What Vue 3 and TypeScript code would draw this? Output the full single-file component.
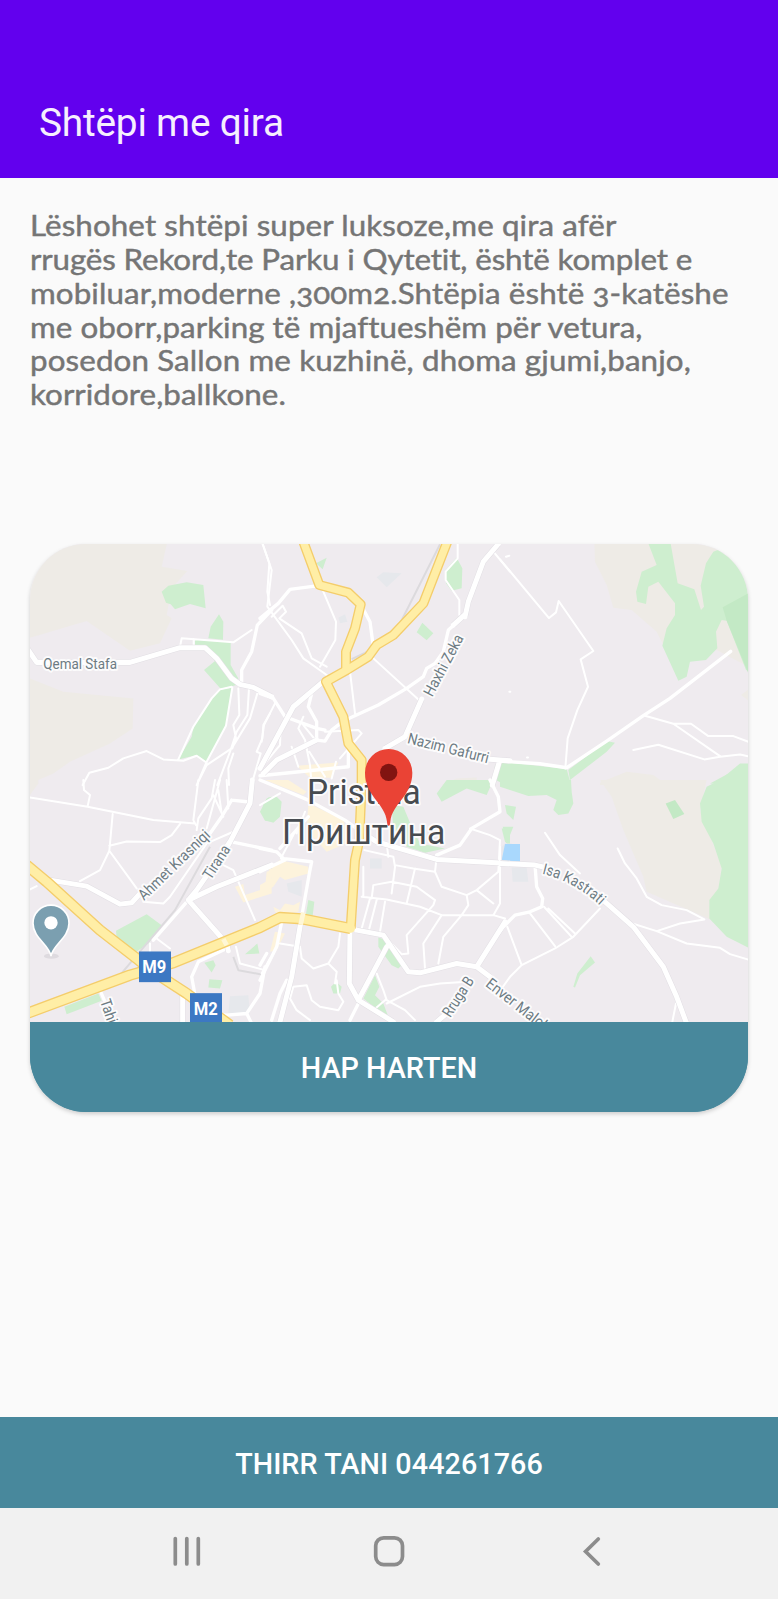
<script setup lang="ts">
interface Tile {
  x: number
  y: number
  beige?: string
  sand?: string
  green?: string
  dark?: string
  blue?: string
  rail?: string
  thin?: string
  mid?: string
  wide?: string
}

const description: string[] = [
  'Lëshohet shtëpi super luksoze,me qira afër',
  'rrugës Rekord,te Parku i Qytetit, është komplet e',
  'mobiluar,moderne ,300m2.Shtëpia është 3-katëshe',
  'me oborr,parking të mjaftueshëm për vetura,',
  'posedon Sallon me kuzhinë, dhoma gjumi,banjo,',
  'korridore,ballkone.',
]

// Map sectors; every sector's geometry is local to its origin.
const tiles: Tile[] = [
  {
    x: 0, y: 0,
    beige: 'M20 20H442L425 95 502 108 455 160 440 240 455 250 420 325 330 347 200 258 30 308ZM30 430L130 470 340 490 338 580 270 625 150 680 100 715 30 745Z',
    green: 'M425 170L445 152 500 142 550 150 557 220 510 207 465 223 452 208 438 203ZM597 238L610 260 609 314 565 310 572 275ZM525 312L632 320V390L655 430 650 450 602 461 552 405 585 378 560 340 525 335ZM635 457L620 572 560 680 530 660 475 673 515 605 520 575 575 490 600 465Z',
    thin: 'M480 335L485 310 640 322 695 285M521 312V335M655 460L658 540 640 570 648 610 637 640M687 460L682 540 650 590 630 650 592 750M712 475L690 550 635 640 560 690 530 750M637 457L618 572 560 680 530 750M640 655L625 700 627 750M188 750L208 713 265 698 310 670 380 648 430 673 490 677 530 662 560 683M600 463L575 490 520 575 475 673M600 463L635 455M750 535L730 570 727 610 710 650 722 655 700 730M728 27L748 85 742 170 750 210',
    mid: 'M665 440V405L695 350 712 270 755 225',
    wide: 'M15 330L50 382H330L480 338H555L590 370 635 430 660 448 700 457 755 485',
  },
  {
    x: 720, y: 0,
    green: 'M590 68L607 100 605 160 575 167 558 145 557 105ZM487 263L520 295 500 316 470 292ZM168 85L200 68 188 103ZM705 690L750 675V750H735L700 730Z',
    blue: 'M350 127L370 112 425 115 380 157ZM235 248L255 238 262 260 240 265Z',
    beige: 'M545 750L590 730 650 727V750Z',
    sand: 'M110 692L235 682 215 728 150 728Z',
    rail: 'M540 28L395 315 275 372',
    thin: 'M8 27L35 105 22 215 95 315 130 370 200 420M190 170L228 260 226 315 180 395M35 245L68 212 78 230 58 250 125 295 155 370 200 395M593 27V70L557 110V135L598 195V240M340 370L480 498M270 410L285 535M700 50L750 110M45 505L12 570 5 620M95 535L62 575 60 630 10 690M130 545L115 580 135 615 150 690 155 750M130 570L170 620M95 635L115 695M148 650L195 725M195 590L295 585 305 595 240 670M228 680L215 730',
    mid: 'M0 250L55 205 90 163 175 152M302 208L330 260 340 335M0 475L40 490 75 545 170 580 195 585M155 475L145 515 170 560V615L195 618 215 585 250 558 355 510 440 460 490 425 500 400 525 385 550 350 565 285 605 250M0 722L265 695V635',
    wide: 'M195 435L100 515 0 700M715 27L670 80 625 200 615 245M613 240L580 270M485 492L435 605 375 640M10 715L50 675 170 615M680 672L750 677M718 680L697 750',
  },
  {
    x: 1440, y: 0,
    beige: 'M283 20H600L700 30V60L755 400 650 345 530 365 490 330 470 290 395 225 340 218 320 150 285 80ZM300 742L380 710 460 720 500 750H300ZM723 480L750 460V500Z',
    green: 'M443 20H511L533 145 583 163 603 225 612 215 602 152 618 85 640 50 690 30H755V410L738 405 680 257 665 255 648 290 652 340 618 375 570 380 560 425 535 437 487 332 500 280 525 240V205L475 140 445 155 438 207 412 200 408 170 425 110 470 90ZM205 705L320 618 345 623 320 650 210 735ZM0 680L200 702 213 750H0ZM630 745L680 718 750 698V750Z',
    dark: 'M668 217L745 175V415L680 257Z',
    thin: 'M0 73L147 249 168 232 176 198 280 348 242 373 264 455 232 525 203 610 196 700M435 542L520 566H573L625 603H700L750 622M520 566L660 663M400 645L475 629 613 673 660 665 720 658 750 665M18 65L28 62M28 470H31M81 667H84',
    mid: 'M0 678L120 686 200 698 320 618 430 542 510 490 692 349',
  },
  {
    x: 0, y: 735,
    beige: 'M30 0H55V10L30 45Z',
    sand: 'M645 320L670 312 675 345 735 325 740 275 755 270V340L670 367Z',
    green: 'M288 452L380 402 425 435 385 490 345 518 290 475ZM133 680L235 640 245 662 140 702ZM675 522L712 490 718 520ZM553 548L580 540 587 555 575 577ZM568 597L607 600 600 625 565 622ZM740 55L755 50V125L735 122 720 95Z',
    blue: 'M630 648L685 645 690 700 625 700Z',
    rail: 'M570 200L465 390 300 585M640 530L655 570 735 585',
    thin: 'M190 0L192 30 210 45 203 78M30 52L203 80 400 120 525 130M278 102L268 212 240 270 180 303M268 197L320 184 420 186 455 165 480 132M268 212L350 325M528 135L520 120 535 0M530 150L535 115 575 55 585 0M560 145L600 0M605 100L595 30M625 85L620 0M580 45L610 110M20 333L50 318M410 475L450 505M390 490V530M640 155L560 190 450 350 430 370 370 365M610 255L640 270 705 420M520 375L615 480M648 500L660 550 735 570M750 535L725 580',
    mid: 'M635 185L755 210M635 60L605 110 570 160 530 190M635 60L680 65M505 360L400 480M620 505L535 545 515 590 525 645 570 700 620 705 680 700 720 640 735 560M680 700L695 730M240 630L255 665',
    wide: 'M90 300L200 318 300 372 335 368 365 335M697 0L690 70 625 195M630 185L530 330 505 360 620 490 625 512M505 360L590 320 755 255M488 640V730',
  },
  {
    x: 720, y: 735,
    sand: 'M145 70L250 120 270 185 200 215 140 150ZM0 315L35 295 25 265 60 240 145 260 145 280 75 300 60 290 40 320 0 345ZM40 380L60 390 75 370 100 375 120 365 115 395 60 405 45 395ZM45 455L75 460 50 510 30 515ZM15 0H85L140 35 130 45Z',
    green: 'M10 70L25 52 50 50 65 65 60 110 40 128 15 120ZM395 75L430 80 455 140 480 190 555 205 495 218 440 200 400 150ZM530 40L560 0H700L680 45 620 25 545 65ZM145 360L163 365 158 407 137 407ZM345 585L358 620 345 645 370 670 385 710 355 690 310 655ZM355 472L380 480 425 555 415 565 395 555 355 500ZM213 620L228 605 245 620 240 640 220 640ZM725 145H750V200L735 185Z',
    blue: 'M330 235H365V265H330ZM80 310L125 300V350L85 335ZM725 200L735 190H755V245L725 240Z',
    thin: 'M313 210L400 230 405 260 395 340M380 190L385 230M405 255L460 265 525 275 530 230M465 265L440 370M305 350L380 358 480 380 545 405 700 405 735 415M330 355L305 445M350 360L328 445M335 355L340 315 395 305 470 320 525 360 520 375 440 465 445 520 425 522 385 480M525 275L545 320 620 345 650 330 715 275 720 180 690 165 630 145M650 330L700 370M620 345L625 375 605 405 550 470 535 550M545 405L490 490 495 565M375 365L360 455M310 260V350M720 240V370L700 405M60 490L120 500 125 535 160 565 205 550 235 500 240 460M205 550L230 575 225 610M100 620L140 615 155 660 180 680 235 690 250 665 235 640 230 600M100 620L90 655 110 690 150 720M350 580L370 630 380 660 435 690 465 720M375 660L340 690M380 670L480 620 540 610 620 605M0 75L60 40M100 165L65 230M135 95L110 160',
    mid: 'M65 425L50 500 0 600M60 205L145 110M0 555L20 520M0 0L145 60 255 120 310 160M530 225L600 195 635 145 720 95 715 50 690 0M80 600L60 640 35 720M0 205L50 215 75 240 0 275M65 235L155 245 148 280 125 410M270 720L300 660',
    wide: 'M125 410L95 590 60 725M310 160L350 185 530 238 750 250M270 445L268 610 295 660 400 725M290 450L370 465 445 575 480 578 590 550 650 560 735 425M295 660L380 500M650 560L690 590M560 700L530 725',
  },
  {
    x: 1440, y: 735,
    beige: 'M300 0H620L600 90 665 260 655 330 628 365 635 420 590 400 440 335 430 290 370 150 335 50Z',
    green: 'M0 0H213L215 35 220 70 205 100 175 105 160 90 170 60 140 45 85 48 30 30 0 20ZM15 75L48 80 40 120 20 100ZM8 140H40L22 185ZM660 0L620 20 600 70 605 125 640 190 665 265 655 325 628 360V415L680 470 750 505V-50H720ZM272 528L285 547 240 585 225 622 220 620 232 580Z',
    dark: 'M497 70L525 60 553 102 520 117Z',
    blue: 'M35 262H80L85 305H38Z',
    thin: 'M135 158L180 225 240 280M353 205L375 250 410 295 440 350 485 375 560 390 613 418 540 430 470 453M390 428L470 453 560 490 660 503 690 522 750 540M90 400L165 498M22 440L65 555M132 380L215 470M145 385L225 460M300 385L220 470 165 505 65 555 30 590 5 625M528 670L517 725M0 200V340',
    mid: 'M105 255L110 320 128 355 125 380 90 395 45 405 10 440 -5 460',
    wide: 'M0 250L105 255 150 265M315 365L400 440 490 560 530 650 558 725',
  },
]

const origin = (t: Tile): string => `translate(${t.x} ${t.y})`

const highways: string[] = [
  'M850 20L898 150 985 173 1022 208 1005 280 978 350V400',
  'M1282 20L1210 205 1120 300 1070 330 1045 365 980 405 918 440 970 545 985 625 1025 675V740L1018 915 1005 975 992 1180',
  'M20 1435L330 1320 460 1283 720 1177 780 1147 845 1151 992 1180',
  'M20 990L80 1040 240 1185 350 1270 400 1310 500 1375 630 1470',
]

// Streets that run over the highway surface.
const crossings = 'M842 1168L850 1132M610 1212L620 1230'
</script>

<template>
  <div class="screen">
    <header class="app-bar"><h1>Shtëpi me qira</h1></header>

    <main>
      <p class="description">
        <span v-for="(line, i) in description" :key="i" :class="`line line-${i}`">{{ line }}</span>
      </p>

      <section class="card">
        <svg class="map" viewBox="30 27 2154 1432" preserveAspectRatio="none">
          <g v-for="(t, i) in tiles" :key="`land${i}`" :transform="origin(t)">
            <path class="beige" :d="t.beige" />
            <path class="sand" :d="t.sand" />
            <path class="green" :d="t.green" />
            <path class="dark" :d="t.dark" />
            <path class="pale" :d="t.blue" />
          </g>
          <path class="lake" d="M1446 970L1455 927H1500V980L1446 977Z" />
          <g class="roads">
            <g v-for="(t, i) in tiles" :key="`road${i}`" :transform="origin(t)">
              <path class="rail" :d="t.rail" />
              <path class="thin" :d="t.thin" />
              <path class="mid" :d="t.mid" />
              <path class="edge" :d="t.wide" />
              <path class="wide" :d="t.wide" />
            </g>
            <path v-for="(d, i) in highways" :key="`c${i}`" :class="['casing', { broad: i > 1 }]" :d="d" />
            <path v-for="(d, i) in highways" :key="`f${i}`" :class="['highway', { broad: i > 1 }]" :d="d" />
            <path class="crossing" :d="crossings" />
          </g>

          <g class="labels">
            <text x="70" y="402" textLength="221" lengthAdjust="spacingAndGlyphs">Qemal Stafa</text>
            <text transform="translate(1237 487) rotate(-62)" textLength="202" lengthAdjust="spacingAndGlyphs">Haxhi Zeka</text>
            <text transform="translate(1160 624) rotate(14)" textLength="250" lengthAdjust="spacingAndGlyphs">Nazim Gafurri</text>
            <text transform="translate(372 1098) rotate(-44)" textLength="280" lengthAdjust="spacingAndGlyphs">Ahmet Krasniqi</text>
            <text transform="translate(572 1036) rotate(-57)" textLength="112" lengthAdjust="spacingAndGlyphs">Tirana</text>
            <path id="isa" class="guide" d="M1566 1016Q1670 1040 1752 1123" />
            <text><textPath href="#isa" textLength="200" lengthAdjust="spacingAndGlyphs">Isa Kastrati</textPath></text>
            <text transform="translate(1291 1449) rotate(-57)" textLength="134" lengthAdjust="spacingAndGlyphs">Rruga B</text>
            <text transform="translate(1394 1351) rotate(38)" textLength="252" lengthAdjust="spacingAndGlyphs">Enver Maloku</text>
            <text transform="translate(240 1398) rotate(71)" textLength="86" lengthAdjust="spacingAndGlyphs">Tahir</text>
          </g>
          <g class="city">
            <text x="861" y="807" textLength="341" lengthAdjust="spacingAndGlyphs">Pristina</text>
            <text x="786" y="928" textLength="490" lengthAdjust="spacingAndGlyphs">Приштина</text>
          </g>

          <g class="shield">
            <rect x="357" y="1249" width="96" height="92" />
            <rect x="510" y="1374" width="96" height="92" />
            <text x="403" y="1315" textLength="72" lengthAdjust="spacingAndGlyphs">M9</text>
            <text x="557" y="1441" textLength="72" lengthAdjust="spacingAndGlyphs">M2</text>
          </g>

          <ellipse class="pin-shade" cx="94" cy="1263" rx="22" ry="8" />
          <path class="gray-pin" d="M93 1263C88 1228 39 1209 39 1164A54 54 0 0 1 147 1164C147 1209 98 1228 93 1263Z" />
          <circle class="white" cx="93" cy="1163" r="20" />

          <path class="red-pin" d="M1106 872C1102 872 1102 868 1101 860C1096 805 1035 783 1035 713A71 71 0 0 1 1177 713C1177 783 1116 805 1111 860C1110 868 1110 872 1106 872Z" />
          <circle class="red-core" cx="1106" cy="712" r="26" />
        </svg>
        <button class="open-map">HAP HARTEN</button>
      </section>
    </main>

    <button class="call">THIRR TANI 044261766</button>

    <nav class="nav-bar">
      <svg viewBox="0 0 778 91">
        <path d="M175.3 30.5V56M186.8 30.5V56M198.3 30.5V56" />
        <rect x="375.7" y="29.8" width="26.8" height="26.8" rx="8" />
        <path d="M598.3 31L585.6 43.5 598.3 56" />
      </svg>
    </nav>
  </div>
</template>

<style>
body {
  margin: 0;
}
</style>

<style scoped>
.screen {
  display: flex;
  flex-direction: column;
  width: 778px;
  height: 1599px;
  overflow: hidden;
  background: #fafafa;
  font-family: Roboto, "Liberation Sans", sans-serif;
}

.app-bar {
  flex: none;
  box-sizing: border-box;
  height: 178px;
  padding: 100px 39px 0;
  background: #6200ee;
}

.app-bar h1 {
  margin: 0;
  color: #f6effe;
  font-size: 38.8px;
  font-weight: 400;
  letter-spacing: -0.2px;
  line-height: 46px;
  white-space: nowrap;
}

main {
  flex: 1;
  padding: 31px 30px 0;
}

.description {
  height: 335px;
  margin: 0;
  color: #757575;
  font-family: Lato, "Open Sans", sans-serif;
  font-size: 28.6px;
  font-variant-ligatures: none;
  font-variant-numeric: oldstyle-nums;
  line-height: 33.85px;
  -webkit-text-stroke: 0.45px #757575;
}

.line {
  display: block;
  width: max-content;
  transform: scaleX(1.095);
  transform-origin: left;
  white-space: nowrap;
}

.line-0 { letter-spacing: 0.1px; }
.line-1 { letter-spacing: -0.11px; }
.line-2 { letter-spacing: 0.1px; }
.line-3 { letter-spacing: 0.05px; }
.line-4 { letter-spacing: 0.12px; }
.line-5 { letter-spacing: 0.05px; }

.card {
  display: flex;
  flex-direction: column;
  height: 568px;
  overflow: hidden;
  border-radius: 56px;
  background: linear-gradient(#efebef 50%, #48889c 50%);
  box-shadow: 0 2px 4px rgba(0, 0, 0, 0.18);
}

.map {
  flex: none;
  display: block;
  width: 718px;
  height: 477.5px;
  background: #efebef;
}

.beige { fill: #eeebe6; }
.sand { fill: #fdf3dc; }
.green { fill: #ceeecf; }
.dark { fill: #c3e9c5; }
.pale { fill: #e6e8ec; }
.lake { fill: #a9d8fd; }
.white { fill: #fff; }

.roads path {
  fill: none;
  stroke: #fff;
  stroke-linejoin: round;
}

.roads .rail { stroke: #dcdadd; stroke-width: 6; }
.roads .thin { stroke-width: 6; stroke-linecap: round; }
.roads .mid { stroke-width: 10; stroke-linecap: round; }
.roads .edge { stroke: #e2dfe4; stroke-width: 18; }
.roads .wide { stroke-width: 15; stroke-linecap: round; }
.roads .casing { stroke: #f4cd6b; stroke-width: 30; }
.roads .casing.broad { stroke-width: 34; }
.roads .highway { stroke: #ffeea6; stroke-width: 22; stroke-linecap: round; }
.roads .highway.broad { stroke-width: 26; }
.roads .crossing { stroke: #fff7d6; stroke-width: 14; }

.labels,
.city {
  paint-order: stroke;
  stroke: #fcfbfc;
  stroke-width: 12;
  stroke-linejoin: round;
}

.labels {
  fill: #6d7b83;
  font-size: 46px;
}

.guide {
  fill: none;
  stroke: none;
}

.city {
  fill: #474b50;
  font-size: 107px;
}

.shield {
  fill: #3c78c3;
  font-size: 56px;
  font-weight: 700;
  text-anchor: middle;
}

.shield text { fill: #fff; }

.pin-shade { fill: #dedadf; }

.gray-pin {
  fill: #7b9fb0;
  stroke: #fff;
  stroke-width: 5;
}

.red-pin { fill: #ea4335; }
.red-core { fill: #811411; }

button {
  flex: none;
  padding: 0;
  border: 0;
  border-radius: 0;
  background: #48889c;
  color: #fff;
  font-family: Roboto, "Liberation Sans", sans-serif;
  font-weight: 500;
}

.open-map {
  height: 91px;
  padding-top: 2px;
  font-size: 28.8px;
}

.call {
  height: 91px;
  padding-top: 3px;
  font-size: 28.7px;
  letter-spacing: 0.08px;
}

.nav-bar {
  flex: none;
  height: 91px;
  background: #f1f1f1;
}

.nav-bar svg {
  display: block;
  width: 778px;
  height: 91px;
  fill: none;
  stroke: #8c8c8c;
  stroke-width: 3.7;
  stroke-linecap: round;
}
</style>
